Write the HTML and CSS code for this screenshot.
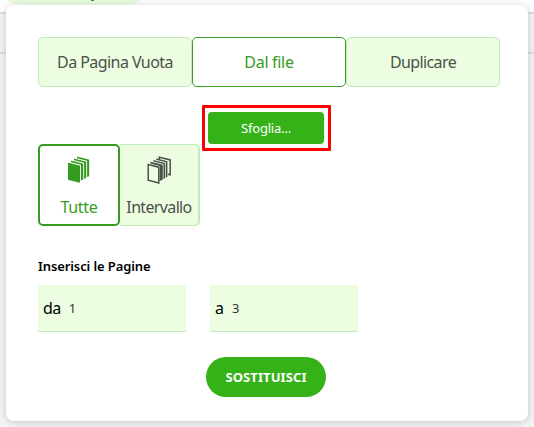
FILE: index.html
```
<!DOCTYPE html>
<html lang="it">
<head>
<meta charset="utf-8">
<title>Sostituisci pagine</title>
<link rel="stylesheet" href="styles.css">
</head>
<body>
<div class="backdrop"><div class="backdrop-top"><div class="backdrop-pill"><i></i></div></div><div class="backdrop-bar"></div></div>
<main class="dialog">
  <nav class="tabs">
    <button class="tab"><span class="t-blank">Da Pagina Vuota</span></button>
    <button class="tab active"><span class="t-file">Dal file</span></button>
    <button class="tab"><span class="t-copy">Duplicare</span></button>
  </nav>
  <div class="browse-row">
    <div class="browse-wrap"><button class="browse"><span>Sfoglia...</span></button></div>
  </div>
  <div class="modes">
    <button class="mode active">
      <svg width="24" height="28" viewBox="0 0 24 28" fill="currentColor"><path d="M1 7Q1 6.6 1.5 6.7L12.5 9.5Q13 9.7 13 10V26.8L1.6 23.9Q1 23.7 1 23.2Z"/><path d="M4 6.3V4.5L15.6 7.4Q16.2 7.6 16.2 8V23.6L13.9 24.5V8.8Z"/><path d="M7 4.2V2.5L18.6 5.4Q19.2 5.6 19.2 6V22L17.1 22.9V6.8Z"/><path d="M10 2.2V.5L21.6 3.4Q22.2 3.6 22.2 4V20.2L20.1 21V4.8Z"/></svg>
      <span>Tutte</span>
    </button>
    <button class="mode range">
      <svg width="25" height="28" viewBox="0 0 25 28"><g fill="currentColor"><path d="M3.4 7.4V5.7L15 8.6Q15.8 8.8 15.8 9.4V23.6L12.7 25V10Z"/><path d="M6.4 5.4V3.9L17.4 6.7Q18.2 6.9 18.2 7.4V22.2L16.5 23V7.9Z"/><path d="M9.2 3.7V2.2L19.6 4.9Q20.4 5.1 20.4 5.6V20.8L18.9 21.6V6.2Z"/></g><g fill="none" stroke="currentColor" stroke-width="1.5"><path fill="#ecfde2" d="M1.2 8.6 11.8 11.2V27L1.2 24.2Z"/><path d="M12.3 3.4V1.2L23.2 3.9V18.8L20.8 18.2"/></g></svg>
      <span>Intervallo</span>
    </button>
  </div>
  <h2 class="heading"><span>Inserisci le Pagine</span></h2>
  <div class="fields">
    <label class="field"><span class="from">da</span><b>1</b></label>
    <label class="field"><span class="to">a</span><b>3</b></label>
  </div>
  <button class="submit"><span>SOSTITUISCI</span></button>
</main>
</body>
</html>
```
FILE: styles.css
```
* { box-sizing: border-box; }
body { margin: 0; width: 534px; height: 427px; overflow: hidden; background: #f4f4f4; font-family: "Noto Sans", "Open Sans", sans-serif; }
button { font: inherit; padding: 0; margin: 0; border: 0; }
span { white-space: nowrap; }
.backdrop { position: absolute; inset: 0; }
.backdrop-top { height: 12px; background: #fff; }
.backdrop-pill { width: 132px; height: 5px; margin-left: 8px; background: #eafde1; border-radius: 0 0 24px 24px / 0 0 5px 5px; }
.backdrop-pill i { display: block; width: 3px; height: 1px; margin-left: 83px; background: #359c21; }
.backdrop-bar { height: 42px; border-top: 2px solid #e0e0e0; border-bottom: 2px solid #e0e0e0; }
.dialog { position: relative; width: 522px; height: 416px; margin: 5px 0 0 6px; padding: 32px 28px 0 32px; background: #fff; border-radius: 8px; box-shadow: 0 1px 9px rgba(0,0,0,.2); display: flex; flex-direction: column; }
.dialog > * { flex: none; }
.tabs { display: flex; width: 462px; height: 50px; }
.tab { flex: 1; background: #ecfde2; border: 1px solid #c0ebb8; border-radius: 5px; color: #4b514a; font-size: 16px; line-height: 24px; }
.tab.active { background: #fff; border-color: #359c21; color: #359c21; }
.t-blank { letter-spacing: -.55px; }
.t-file { letter-spacing: -.4px; }
.t-copy { letter-spacing: -.6px; }
.browse-row { height: 57px; padding: 25px 0 0 170px; }
.browse-wrap { position: relative; width: 116px; height: 32px; }
.browse-wrap::after { content: ""; position: absolute; inset: -7px -7px -7px -6px; border: 3px solid #f00; border-radius: 1px; z-index: 2; }
.browse { display: block; width: 116px; height: 32px; background: #34b218; border-radius: 4px; color: #fff; font-size: 13px; letter-spacing: -.2px; }
.modes { display: flex; height: 82px; }
.mode { width: 82px; height: 82px; display: flex; flex-direction: column; align-items: center; padding-top: 10px; background: #ecfde2; border: 2px solid #c0ebb8; border-radius: 5px; color: #4b514a; font-size: 16px; line-height: 22px; }
.mode svg { display: block; flex: none; margin-bottom: 12px; }
.mode.active { background: #fff; border-color: #359c21; color: #359c21; }
.active > span { letter-spacing: -.3px; }
.mode.range { width: 80px; border-width: 1px 2px 1px 0; padding-top: 11px; border-radius: 0 5px 5px 0; }
.mode.range span { letter-spacing: -.65px; }
.heading { margin: 30px 0 0; height: 29px; font-size: 13px; line-height: 20px; font-weight: 600; color: #000; letter-spacing: -.1px; }
.fields { display: flex; gap: 24px; }
.field { width: 148px; height: 47px; display: flex; align-items: center; gap: 8px; padding-left: 5px; background: #ecfde2; border-bottom: 1px solid #c0ebb8; color: #000; font-size: 16px; line-height: 22px; }
.from { letter-spacing: -.5px; }
.field b { font-size: 13px; font-weight: 400; color: #333; }
.submit { width: 120px; height: 40px; margin: 25px 0 0 168px; background: #34b218; border-radius: 20px; color: #fff; font-size: 13px; font-weight: 700; letter-spacing: .1px; }
```
